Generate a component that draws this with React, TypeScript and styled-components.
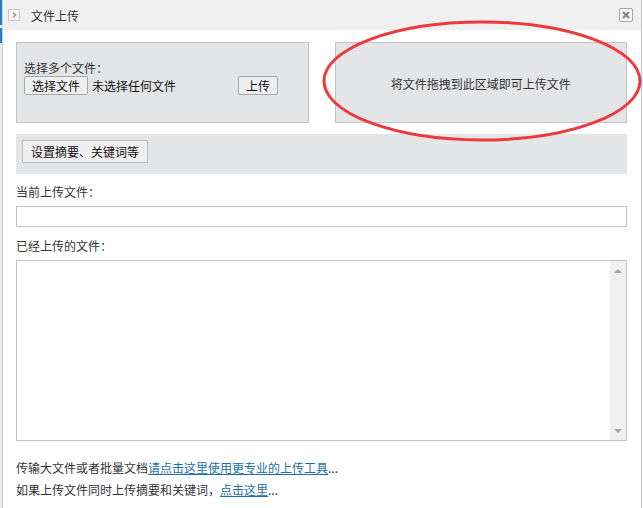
import React from 'react';
import styled, { createGlobalStyle } from 'styled-components';

const GlobalStyle = createGlobalStyle`
  html, body {
    margin: 0;
    padding: 0;
    background: #fff;
  }
  body {
    font-family: "Noto Sans CJK SC", "Liberation Sans", sans-serif;
    font-size: 12px;
    color: #333;
  }
`

const Page = styled.div`
  position: relative;
  display: flex;
  height: 508px;
  width: 643px;
  overflow: hidden;
`

const BackStrip = styled.div`
  width: 2px;
  background: linear-gradient(
    to bottom,
    #1c7fd0 0px, #1c7fd0 25px, #fff 25px, #fff 28px,
    #1c7fd0 28px, #1c7fd0 43px, #eaeaea 43px, #eaeaea 100%
  );
`

const Dialog = styled.div`
  flex: 1;
  display: flex;
  flex-direction: column;
  border-left: 1px solid #cfcfcf;
  border-right: 1px solid #c8c8c8;
  margin-right: 1px;
  background: #fff;
`

const TitleBar = styled.div`
  height: 30px;
  display: flex;
  align-items: center;
  padding: 0 8px 0 5px;
  background: #f0f0f0;
`

const TitleIcon = styled.div`
  width: 12px;
  height: 12px;
  box-sizing: border-box;
  border: 1px solid #c9c9c9;
  background: #f7f7f7;
  display: flex;
  align-items: center;
  justify-content: center;
`

const Title = styled.span`
  margin-left: 11px;
  font-size: 12px;
  color: #333;
  flex: 1;
`

const CloseBox = styled.div`
  width: 14px;
  height: 14px;
  box-sizing: border-box;
  border: 1px solid #a9a9a9;
  border-radius: 2px;
  background: #f6f6f6;
  display: flex;
  align-items: center;
  justify-content: center;
`

const Body = styled.div`
  padding: 12px 14px 0 13px;
`

const TopRow = styled.div`
  display: grid;
  grid-template-columns: 1fr 1fr;
  gap: 26px;
  height: 81px;
`

const Panel = styled.div`
  box-sizing: border-box;
  background: #e4e5e7;
  border: 1px solid #c3c3c3;
`

const PickPanel = styled(Panel)`
  padding: 17px 0 0 7px;
`

const DropPanel = styled(Panel)`
  display: flex;
  align-items: center;
  justify-content: center;
  padding-top: 2px;
`

const PickLabel = styled.div`
  line-height: 16px;
`

const PickRow = styled.div`
  display: flex;
  align-items: center;
  gap: 4px;
`

const FilePick = styled.div`
  width: 210px;
  display: flex;
  align-items: center;
  gap: 4px;
`

const Btn = styled.button<{ $tall?: boolean }>`
  font-family: inherit;
  font-size: 12px;
  color: #111;
  background: #efefef;
  border: 1px solid ${p => (p.$tall ? '#bdbdbd' : '#a7a7a7')};
  border-radius: ${p => (p.$tall ? '0' : '2px')};
  height: ${p => (p.$tall ? '23px' : '19px')};
  padding: 0 ${p => (p.$tall ? '8px' : '7px')};
  line-height: 1;
  margin: 0;
  cursor: pointer;
`

const FileName = styled.span`
  color: #111;
`

const DropText = styled.span`
  color: #333;
`

const MetaBar = styled.div`
  margin-top: 11px;
  height: 40px;
  box-sizing: border-box;
  padding: 6px;
  background: #e4e5e7;
`

const FieldLabel = styled.div<{ $gap?: number }>`
  line-height: 18px;
  margin: ${p => p.$gap ?? 9}px 0 5px;
  color: #333;
`

const Input = styled.input`
  display: block;
  box-sizing: border-box;
  width: 611px;
  height: 21px;
  margin: 0;
  border: 1px solid #c3c3c3;
  outline: none;
`

const ListBox = styled.div`
  display: flex;
  box-sizing: border-box;
  width: 611px;
  height: 181px;
  border: 1px solid #c3c3c3;
`

const ListArea = styled.div`
  flex: 1;
`

const ScrollTrack = styled.div`
  width: 16px;
  background: #f0f0f0;
  display: flex;
  flex-direction: column;
  justify-content: space-between;
  align-items: center;
  padding: 8px 0 7px;
`

const Arrow = styled.div<{ $down?: boolean }>`
  width: 0;
  height: 0;
  border-left: 4px solid transparent;
  border-right: 4px solid transparent;
  ${p =>
    p.$down
      ? 'border-top: 4px solid #a3a3a3;'
      : 'border-bottom: 4px solid #a3a3a3;'}
`

const Footer = styled.div`
  margin-top: 16px;
  line-height: 22px;
  color: #333;
`

const Link = styled.a`
  color: #1b6ea6;
  text-decoration: underline;
`

// red hand-drawn annotation lying over the drop area
const Mark = styled.svg`
  position: absolute;
  left: 0;
  top: 0;
  pointer-events: none;
`

function App() {
  return (
    <Page>
      <GlobalStyle />
      <BackStrip />
      <Dialog>
        <TitleBar>
          <TitleIcon>
            <svg width="8" height="8" viewBox="0 0 8 8">
              <path d="M3 1.5 L5.5 4 L3 6.5" fill="none" stroke="#9a9a9a" strokeWidth="1.6" />
            </svg>
          </TitleIcon>
          <Title>文件上传</Title>
          <CloseBox>
            <svg width="10" height="10" viewBox="0 0 10 10">
              <path d="M2 2 L8 8 M8 2 L2 8" stroke="#8a8a8a" strokeWidth="2.4" />
            </svg>
          </CloseBox>
        </TitleBar>
        <Body>
          <TopRow>
            <PickPanel>
              <PickLabel>选择多个文件：</PickLabel>
              <PickRow>
                <FilePick>
                  <Btn>选择文件</Btn>
                  <FileName>未选择任何文件</FileName>
                </FilePick>
                <Btn>上传</Btn>
              </PickRow>
            </PickPanel>
            <DropPanel>
              <DropText>将文件拖拽到此区域即可上传文件</DropText>
            </DropPanel>
          </TopRow>
          <MetaBar>
            <Btn $tall>设置摘要、关键词等</Btn>
          </MetaBar>
          <FieldLabel>当前上传文件：</FieldLabel>
          <Input />
          <FieldLabel $gap={10}>已经上传的文件：</FieldLabel>
          <ListBox>
            <ListArea />
            <ScrollTrack>
              <Arrow />
              <Arrow $down />
            </ScrollTrack>
          </ListBox>
          <Footer>
            <div>
              传输大文件或者批量文档<Link href="#">请点击这里使用更专业的上传工具</Link>...
            </div>
            <div>
              如果上传文件同时上传摘要和关键词，<Link href="#">点击这里</Link>...
            </div>
          </Footer>
        </Body>
      </Dialog>
      <Mark width="643" height="160" viewBox="0 0 643 160">
        <ellipse cx="482" cy="81" rx="158" ry="59" fill="none" stroke="#ec3a3c" strokeWidth="3" />
      </Mark>
    </Page>
  );
}

export default App;
